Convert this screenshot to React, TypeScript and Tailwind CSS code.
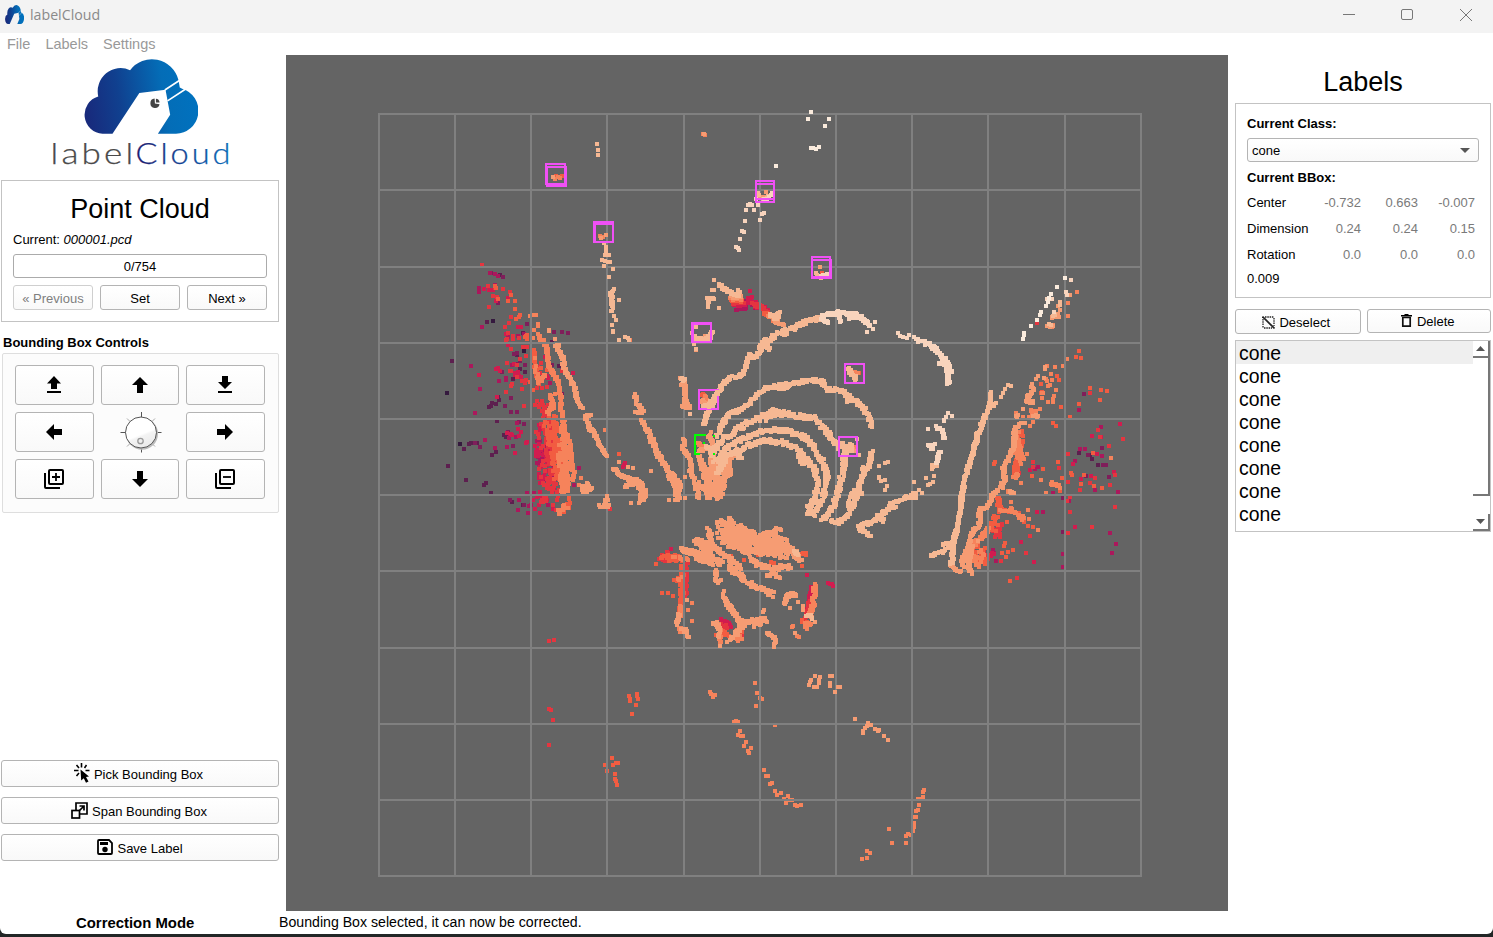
import React from "react";

/* ---------- point cloud data ---------- */

const PALETTE = [
  "#35193e", "#5d1f4f", "#7f1e5a", "#ab185c", "#d11c4f", "#e5353f",
  "#f25c41", "#f6835b", "#f69c73", "#f6b893", "#f8d4bd", "#faebdd",
];

// Each region is stored in thirds of a pixel relative to its origin.
type Trail = [from: number, to: number, spread: number, path: string];
type Region = { x: number; y: number; dots?: [number, string][]; trails?: Trail[] };

const REGIONS: Region[] = [
  {
    x: 430, y: 250,
    dots: [
      [0, "189,213 51,429 90,582 282,303"],
      [1, "171,216 210,74 67,333 117,582 102,597 123,580 141,579 186,615 197,606 54,648 108,690 162,705 168,699 183,728 177,471 183,468 187,459 197,462 204,440 207,450 222,555 228,562 249,387 261,315 279,248 366,276 387,348 201,513 270,357 285,367 279,765 246,756"],
      [2, "183,70 219,81 204,159 291,222 396,246 414,249 243,444 225,468 243,486 261,486 249,588 267,516 216,366 261,309 252,312 240,750 282,765 234,546 282,522 135,579 261,342 270,333 285,345 396,432 372,246 366,346 150,591"],
      [3, "180,69 195,72 204,78 195,104 156,231 147,113 147,119 147,125 123,348 150,417 135,489 165,570 195,594 231,591 228,384 207,393 246,345 237,564 264,780 303,765 264,258 282,252 261,519 258,562 240,553 447,654 432,705 447,705 234,262 228,390 291,728 312,728 330,733 294,789 297,768 360,400 322,572 320,640 325,620 345,690 268,750 355,765"],
      [4, "162,117 177,120 189,120 180,121 198,153 273,231 234,286 228,252 204,354 197,357 210,362 201,441 147,375 252,342 264,366 273,382 267,377 255,369 231,548 243,551 264,537 273,546 246,556 267,558 291,576 288,579 255,609 429,369 585,639 582,646 579,651 264,231 234,143 255,375 345,320 350,378 355,385 320,740 308,750 315,778 327,765 330,788 370,778 350,750"],
      [5, "155,46 174,108 195,113 189,138 201,141 177,171 219,117 237,219 243,201 225,231 228,271 243,297 234,249 249,268 270,327 288,318 231,339 243,363 261,345 240,363 246,402 243,408 276,417 228,426 282,467 240,125 267,265 291,290 279,291 333,339 288,390 395,364 231,267 249,259 261,380 276,393 285,400 539,778 325,350 330,370 318,365 340,385 335,415 350,410 322,415 318,545 340,755"],
      [6, "195,108 198,114 203,148 243,135 234,153 255,153 255,177 270,195 267,202 258,207 288,259 292,256 291,267 285,262 567,612 315,345 300,395 333,355 350,360 310,420"],
      [7, "299,198 312,195 319,195 324,222 323,228 312,240 309,264 324,252 330,258 327,265 330,270 342,270 342,285 315,324 525,540 453,684 448,704"],
      [8, "358,240 357,243 375,267 567,636 594,652 609,654 663,663 717,750 765,744 603,759 627,759 629,753"],
      [9, "528,6 516,30 525,33 540,36 522,48 549,57 537,81 552,117 567,150 552,198 558,210 546,225 549,243 548,246 567,270 597,270 585,262 594,264"],
    ],
    trails: [
      [7, 7, 1, "351,290 352,325 360,355 384,395 392,440 392,480"],
      [8, 8, 1, "378,290 384,300 400,325 400,350 420,385 434,415 442,450 455,475"],
      [8, 8, 1.2, "465,500 480,535 500,560 510,590 530,615"],
      [8, 8, 1, "378,285 390,288"], [8, 8, 1, "465,498 480,498"],
      [9, 9, 1.2, "545,125 545,150 546,180"],
      [6, 7, 1, "312,303 315,350 325,400 345,375"],
      [7, 7, 2.5, "368,435 366,470 350,490"],
      [7, 7, 1.2, "400,490 400,530 415,570 425,620 432,690"],
      [7, 7, 2, "395,530 405,600 410,660 412,720"],
      [6, 7, 2.5, "375,495 375,540 390,620 395,680 400,725 415,725"],
      [6, 7, 3, "425,745 405,775 385,785"],
      [5, 5, 10, "345,510 345,580 355,650 365,710 370,730"],
      [4, 5, 12, "345,540 340,600 350,660 365,710 350,760"],
      [3, 4, 11, "340,560 350,640 355,720"],
      [5, 6, 5, "325,455 350,480 350,540 375,600 385,680"],
      [8, 8, 1, "550,655 570,675 600,688 625,692 640,710"], [8, 8, 1, "585,708 610,702 630,695"],
      [8, 8, 2, "628,715 645,725 640,748"],
      [8, 8, 1.5, "612,435 620,455 640,485 615,490"], [8, 8, 2, "635,510 650,540 665,565 675,595 700,640 715,660"],
      [8, 8, 3, "715,685 735,690 740,720 742,748"], [8, 8, 1.2, "715,660 728,675 755,708"],
      [8, 8, 2, "530,745 530,765 512,768"], [8, 8, 2, "455,724 465,708 486,716"], [8, 8, 1, "470,700 470,724"],
      [9, 8, 1, "752,382 765,390 756,405"], [8, 8, 1.5, "765,420 765,455 775,470"],
    ],
  },
  {
    x: 630, y: 100,
    dots: [
      [7, "220,102 225,104 0,720"], [8, "222,102 408,276 570,501"],
      [11, "543,36 534,57 597,57 585,78"], [11, "543,144 550,144 558,147 567,141 438,198"],
      [10, "354,315 366,314 360,312 384,315 348,330 372,330 396,342 402,339 390,360 345,363 336,393 342,396 330,417 318,441 324,444 327,450 378,297 426,279 422,285 416,291"],
      [9, "252,540 245,570 252,570 234,621 267,624 198,682 186,699 192,732 198,748 398,298 386,285 384,280"],
      [4, "360,573 366,591 405,621"], [6, "576,519"], [10, "736,666 729,687 711,696"],
    ],
    trails: [
      [9, 9, 1, "230,598 250,594"], [9, 9, 0.5, "236,600 234,615"],
      [9, 9, 1.6, "268,555 285,565 300,578 325,585"], [9, 9, 1.6, "325,568 322,586 303,584"],
      [8, 8, 1, "305,590 332,590"], [7, 7, 1, "303,596 334,596"], [6, 6, 1, "303,602 336,602"], [5, 5, 1, "306,609 340,609"],
      [4, 4, 1.2, "312,617 346,612"], [3, 3, 1.5, "316,628 345,624 345,605"], [3, 3, 1.5, "358,600 372,612 372,622"],
      [4, 4, 2, "355,600 365,604 380,618 410,633"],
      [5, 5, 2, "370,610 390,620 405,635 420,645"], [6, 6, 2, "400,638 425,650"], [7, 8, 2.5, "415,645 440,660 458,672"], [9, 9, 1.8, "420,643 440,658 450,640"],
      [8, 8, 2, "205,715 225,710 240,705"], [9, 9, 1.4, "194,712 222,722 242,710 248,692"],
      [9, 9, 2, "385,748 400,730 430,710 465,693 500,680 535,662 570,655"],
      [9, 9, 1, "405,735 417,748"], [9, 9, 1, "455,700 468,706"],
      [10, 10, 1.4, "580,645 620,640 650,640 680,645 700,660 715,678"], [10, 10, 0.8, "625,635 630,665"], [10, 10, 0.8, "575,658 595,668"],
      [10, 10, 1.4, "655,655 690,650"], [8, 9, 1, "390,292 405,294 420,286"], [10, 10, 0.6, "398,300 410,300"], [9, 10, 1.2, "560,520 572,530 588,526"],
    ],
  },
  {
    x: 640, y: 340,
    dots: [
      [8, "33,393 87,479 134,474 135,410 168,30 162,12"],
      [9, "150,222 717,378 736,369 743,366 718,414 734,420 740,438 736,450 822,426 837,450 846,459 858,414 882,408 878,426 864,435 870,432 718,410 724,424 652,296 656,345"],
      [10, "864,267 774,-20 779,-12 789,-8 800,-6 808,-15 822,-9 828,-2 911,242 924,219 918,231 936,228 912,240"],
    ],
    trails: [
      [9, 9, 1.4, "375,5 350,50 325,55 305,105 265,115 235,155 215,185 200,225 192,250"],
      [9, 9, 1, "325,45 350,50"], [9, 9, 0.5, "380,5 388,28"],
      [9, 9, 1.8, "230,290 250,250 270,220 305,205 330,190 350,160 385,142 430,135 475,128 515,118 545,125 560,148 605,150 640,180 665,195 685,225 694,260"],
      [9, 9, 1, "420,148 450,138"], [9, 9, 1, "615,160 625,185"],
      [9, 9, 2.4, "215,345 240,305 270,285 300,262 340,240 385,225 430,220 480,230 525,235 550,265 580,298 600,320"],
      [9, 9, 1, "375,242 395,210 415,215"],
      [9, 9, 2.2, "225,370 250,335 280,310 320,290 370,275 415,270 450,275 490,290 520,320 545,360 562,400 560,440 545,480 530,510 500,520"],
      [9, 9, 2.2, "235,400 255,350 290,335 325,315 370,302 420,305 465,320 500,355 525,385 533,430 525,475 505,510"],
      [9, 9, 2.2, "470,345 495,370"], [9, 9, 1.6, "500,500 525,525"],
      [8, 8, 1.8, "175,345 190,385 195,420 205,470"], [8, 8, 2.2, "210,280 218,320 215,380 210,430 205,472"],
      [8, 8, 3.5, "250,340 245,380 235,430 235,472"], [8, 8, 3.5, "270,350 265,390 245,430 240,472"],
      [8, 9, 2.5, "280,340 300,350"], [8, 8, 3, "205,390 215,440 235,472"], [8, 8, 3, "228,380 225,470"],
      [8, 8, 1.6, "132,300 130,325 150,360 155,400 170,440 175,475"], [8, 8, 1.2, "175,430 190,450"],
      [9, 9, 2.2, "612,350 610,390 600,430 590,475 565,525 545,540"],
      [9, 9, 1.8, "692,335 690,375 670,395 660,430 645,480 625,520 600,548 575,545"], [9, 9, 3, "640,455 630,495"], [9, 9, 1.5, "665,385 675,400"], [9, 9, 1.5, "645,455 665,460"],
      [9, 9, 1.8, "655,560 690,550 720,530 750,500 770,505"], [9, 9, 1, "655,565 690,590"], [9, 9, 1.4, "710,525 730,545"],
      [9, 9, 1, "750,490 790,478 825,460 825,472"], [10, 10, 1.8, "830,0 865,10 895,35 920,70 925,100 925,135"], [10, 10, 1, "895,70 925,75 935,100"],
      [10, 10, 1.2, "890,262 908,270 912,295"], [10, 9, 1.6, "900,335 890,370 875,385"], [10, 10, 1, "865,315 875,325 882,315"],
      [8, 8, 1.2, "122,115 132,125 135,165 140,190"], [8, 8, 1.2, "130,200 150,195"],
      [8, 8, 2, "185,180 195,200 210,190"], [9, 9, 1.5, "192,198 215,198 225,175"], [6, 7, 1, "188,160 200,178"],
      [9, 9, 2, "625,88 638,105 652,116"], [7, 6, 1, "643,95 656,97"],
      [9, 9, 3.5, "608,310 615,335 632,315"], [8, 8, 1.2, "628,315 640,332"], [7, 7, 0.5, "640,318 642,330"],
      [7, 7, 1.2, "172,312 190,318"], [8, 8, 1.5, "175,328 195,330"],
      [9, 9, 1, "195,318 208,325"],
      [8, 8, 3, "95,410 110,440 115,470"], [8, 8, 2.5, "0,430 5,475 15,465"],
    ],
  },
  {
    x: 640, y: 510,
    dots: [
      [4, "93,118 501,195 565,218 570,222 576,222 580,228"], [5, "66,135 80,127 85,130 57,146 307,374"],
      [6, "48,161 102,209 66,249 84,249 98,258 311,150 354,135 486,168 228,374"],
      [7, "156,279 144,300 156,333 457,350 465,369 471,378 476,380 460,347"],
      [8, "251,243 372,300 370,305 450,294 474,276 489,288 489,301 240,408 525,336 141,270"],
    ],
    trails: [
      [5, 6, 2, "65,147 90,148 120,148"], [6, 7, 2, "65,140 120,140 140,150"],
      [6, 6, 2, "128,165 126,200 125,245 123,280 118,310"], [5, 5, 0.5, "140,160 138,210 138,255"], [7, 8, 1.2, "125,290 118,315 108,345"],
      [6, 7, 1.5, "110,208 125,205"], [7, 8, 2, "115,360 135,360 145,385"],
      [8, 8, 2.5, "120,118 150,125 180,145 220,160"], [8, 8, 2.5, "140,125 170,130 210,150"], [8, 8, 2.8, "165,90 190,110 220,140 245,165"],
      [8, 8, 2.8, "165,92 200,100 220,115"], [8, 8, 2, "208,60 212,100 240,125 275,150 300,175"], [8, 8, 4, "265,170 300,185"],
      [8, 8, 4, "235,45 265,30 290,50 320,65"], [8, 8, 3, "320,68 360,78 400,72 415,55"], [8, 8, 4, "235,65 270,80 310,85 360,90 410,95 435,90"],
      [8, 8, 3, "262,50 300,75 340,95 380,105 430,115 465,130"], [8, 8, 3, "240,85 270,105 310,120 350,125 400,130 440,140"],
      [8, 8, 4, "300,60 320,90 340,100"], [8, 8, 3, "265,40 280,90 330,115"],
      [8, 8, 3, "330,145 355,165 395,175 450,170"], [8, 8, 2.5, "385,190 415,200"], [8, 8, 2.5, "350,115 400,122 440,122"],
      [8, 8, 3, "440,110 465,128 480,148"], [6, 6, 1.5, "482,130 495,132"], [9, 9, 1.2, "462,125 472,132"], [6, 6, 1, "395,158 405,162"],
      [8, 8, 2.2, "270,180 310,205 345,230 375,240 400,255"], [8, 8, 1.5, "230,180 228,215 240,212"],
      [8, 8, 1.6, "250,255 262,280 285,310 300,335 310,345"], [8, 8, 2.2, "300,340 335,330 375,330"], [8, 8, 1.6, "345,345 365,340"],
      [8, 8, 2, "310,350 285,375 268,390"], [8, 7, 2, "222,338 235,345 240,380 240,395"],
      [4, 4, 3, "243,332 260,340 270,348"], [5, 5, 2.5, "245,348 265,352"], [6, 6, 3.5, "250,360 262,375"], [5, 6, 3, "285,375 305,365"], [7, 7, 3, "290,365 300,390"],
      [8, 8, 1.2, "380,368 395,378 408,390 405,408"], [8, 8, 1, "470,255 440,258 436,280"], [8, 8, 0.6, "445,250 468,252"],
      [4, 5, 1, "515,232 506,290 495,330"], [7, 7, 2, "525,228 522,265 515,300 508,325"], [7, 7, 3, "495,350 505,350"], [9, 9, 1.4, "500,315 518,322"], [6, 7, 2, "490,335 510,345"],
      [6, 6, 0.6, "272,138 275,148"],
    ],
  },
  {
    x: 920, y: 270,
    dots: [
      [11, "435,24 411,51 393,72 378,108 387,85 363,126 360,134 351,150 333,168 312,188 311,195 309,207 384,95"],
      [10, "453,30 438,67 442,74 402,126 381,88 396,87"],
      [9, "420,96 419,104 398,138 404,135 386,163 392,165 263,345 273,348 249,370 244,382 228,398 256,357"],
      [8, "449,75 415,108 420,120 416,141 398,168 380,168 354,318 348,327 372,324 375,290 375,298 309,417 315,460"],
      [7, "471,66 444,99 444,138 442,267 381,288 405,291 430,288 393,312 377,327 380,333 390,345 384,348 408,360 402,378 399,387 384,396 366,384 366,370 360,417 330,468 273,696 348,423 352,438 342,438 324,720 321,552 309,441 327,441 399,396 363,630 303,640 573,564 378,669 327,747 354,780 395,330 340,455"],
      [6, "477,243 468,261 483,264 411,318 417,330 363,342 423,411 510,354 543,360 561,363 540,390 477,402 450,441 399,460 408,468 492,615 522,648 546,654 453,609 456,615 483,642 414,576 369,597 324,767 340,771 279,840 264,846 258,861 270,933 519,549 426,624 420,663 225,576 222,582 255,819 252,828 246,849 312,755 297,730 303,742 261,756 336,618"],
      [5, "510,369 609,507 540,502 568,528 534,480 444,552 339,576 417,594 450,682 570,646 586,615 586,712 450,726 444,790 515,771 318,849 291,924 330,798 480,660 444,636 351,160 525,624 509,639 243,873 298,609 442,692 339,590"],
      [4, "600,462 516,498 531,552 459,582 582,606 351,726 465,771 483,627 303,816 216,850 222,852 342,876 213,858 513,618 543,502 329,600"],
      [3, "477,420 543,471 480,537 495,537 546,558 465,573 594,666 369,726 570,789 588,822 576,849 429,852 429,891 448,692 399,669 228,873 220,840 354,590 345,598 525,660 222,848"],
      [2, "492,372 546,534 504,555 549,585 567,621 498,618 429,684 429,786 557,585"],
      [1, "477,549 510,555 516,567 534,585"],
    ],
    trails: [
      [9, 9, 0.5, "212,368 210,395 222,408"], [9, 9, 1.4, "212,395 195,440 175,490 155,560 140,610 128,660 122,720 112,770 100,820 95,880"],
      [9, 9, 1, "112,780 95,820 70,845 32,858"], [9, 9, 0.6, "68,822 90,820"], [8, 8, 0.6, "92,885 108,898 123,906"],
      [8, 8, 1.4, "300,460 285,480 282,520 272,555 262,575 250,595 255,630 245,650 220,670 208,705 180,720 178,760 155,795 145,835 130,860 128,890"],
      [8, 8, 1, "335,345 340,360 325,380 320,395 340,398"], [7, 8, 2, "285,435 290,442"], [7, 8, 1, "335,418 340,440 355,438"],
      [7, 7, 3, "290,490 290,540 285,555"], [6, 7, 3.5, "305,485 300,515 295,550 305,575"], [6, 7, 2, "290,575 285,620 298,615"],
      [7, 8, 1.5, "205,775 190,800 165,820 150,850 145,890 155,910"], [6, 7, 6, "165,830 180,845 175,875 190,880"],
      [6, 5, 5, "235,740 220,770 235,800"], [6, 7, 2, "235,680 240,720 275,720 310,745"], [5, 6, 4, "200,850 185,880"],
      [7, 8, 1, "260,665 280,668"], [7, 7, 2, "395,640 420,652"], [8, 8, 1, "415,135 395,142"], [8, 7, 1, "385,165 400,168"], [5, 5, 2, "245,765 225,790"], [6, 7, 1, "365,365 370,370"],
    ],
  },
  {
    x: 535, y: 630,
    dots: [
      [5, "42,33 57,30 42,237 48,240 54,270 42,346"],
      [6, "282,198 285,206 285,213 306,192 306,198 309,207 303,225 291,252 231,384 210,405 234,405 243,399 249,399 216,423 240,432 240,447 243,454 246,465"],
      [7, "525,186 528,193 534,201 540,195 660,159 666,189 675,204 681,207 663,228 603,272 598,276 609,276 615,303 609,315 618,318 624,318 633,336 627,348 648,354 639,363 642,369 720,286 687,420 693,438 699,438 705,462 711,459 720,483 726,495 738,489 759,498 747,506 753,519 765,510 771,510 780,525 786,528 798,525 1062,597 1071,639 1113,639 1113,618 1119,612 1128,616 1134,604 1137,590 1137,579 1140,561 1144,561 1143,543 1149,540 1152,525 1164,501 1155,506 1148,506 1164,486 1167,480 996,663 1005,669 981,687 996,684"],
      [8, "840,138 828,150 825,157 822,165 855,141 852,150 852,159 846,171 837,171 885,138 891,138 885,159 885,168 900,186 909,171 915,171 960,267 999,279 1008,285 996,287 990,295 984,302 984,309 1020,297 1028,302 1032,300 1047,318 1059,330 780,9"],
      [7, "786,18 792,20"],
    ],
  },
  {
    x: 540, y: 130,
    dots: [
      [9, "170,42 174,60 174,76 192,340 198,352 198,362 195,374 207,375 204,395"],
      [7, "54,142 45,146 60,144 180,318 189,321"], [6, "48,139 66,138"], [8, "39,142 184,325 198,315"],
    ],
  },
];

function createRandom(seed: number) {
  let s = seed;
  return () => {
    s = (s * 1664525 + 1013904223) % 4294967296;
    return s / 4294967296;
  };
}

function parse(path: string): [number, number][] {
  return path.split(" ").map((p) => p.split(",").map(Number) as [number, number]);
}

function buildCloud(): string[] {
  const rand = createRandom(42);
  const layers = PALETTE.map(() => "");
  const put = (color: number, x: number, y: number) => {
    layers[color] += `M${Math.round(x - 2)} ${Math.round(y - 2)}h4v4h-4z`;
  };
  for (const region of REGIONS) {
    for (const [from, to, spread, path] of region.trails ?? []) {
      const pts = parse(path);
      const density = spread > 8 ? 1.4 : spread > 3 ? 2.8 : 2.2;
      for (let i = 0; i < pts.length - 1; i++) {
        const [ax, ay] = pts[i];
        const [bx, by] = pts[i + 1];
        const steps = Math.max(1, Math.ceil((Math.hypot(bx - ax, by - ay) / 6) * density));
        for (let k = 0; k <= steps; k++) {
          const t = k / steps;
          const along = (i + t) / (pts.length - 1);
          const color = Math.round(from + (to - from) * Math.min(1, Math.max(0, along + (rand() - 0.5) * 0.5)));
          const reach = spread * 1.5 + 1;
          put(
            color,
            region.x + (ax + (bx - ax) * t) / 3 + (rand() - 0.5) * reach,
            region.y + (ay + (by - ay) * t) / 3 + (rand() - 0.5) * reach,
          );
        }
      }
    }
    for (const [color, path] of region.dots ?? []) {
      for (const [x, y] of parse(path)) put(color, region.x + x / 3, region.y + y / 3);
    }
  }
  return layers;
}

const CLOUD = buildCloud();
const GRID_X = [379, 455, 531, 607, 684, 760, 836, 912, 988, 1065, 1141];
const GRID_Y = [114, 190, 267, 343, 419, 495, 571, 648, 724, 800, 876];

// Front and back faces of every labelled box.
const BOXES: [number, number, number, number][] = [
  [546, 164, 19, 20], [547, 167, 19, 19],
  [756, 181, 18, 18], [756, 184, 18, 18],
  [594, 222, 19, 20], [595, 224, 18, 18],
  [812, 257, 18, 20], [812, 260, 19, 18],
  [692, 323, 19, 19], [693, 324, 18, 18],
  [845, 364, 19, 19],
  [699, 390, 19, 19],
  [839, 437, 18, 19],
];

function PointCloudView() {
  const layer = (i: number) => <path key={i} d={CLOUD[i]} fill={PALETTE[i]} />;
  return (
    <svg className="block h-[856px] w-[942px]" viewBox="286 55 942 856" shapeRendering="crispEdges">
      <rect x="286" y="55" width="942" height="856" fill="#646464" />
      {[0, 1, 2, 3, 4, 5, 6, 7].map(layer)}
      <g fill="#808080">
        {GRID_X.map((x) => <rect key={x} x={x - 1} y="113" width="2" height="764" />)}
        {GRID_Y.map((y) => <rect key={y} x="378" y={y - 1} width="764" height="2" />)}
      </g>
      {[8, 9, 10, 11].map(layer)}
      <g fill="none" strokeWidth="2" stroke="#f050f5">
        {BOXES.map(([x, y, w, h], i) => <rect key={i} x={x} y={y} width={w} height={h} />)}
      </g>
      <path d="M706 435H695V454H700M713 436H715M704 442V444M713 454H715" fill="none" stroke="#00ff00" strokeWidth="2" />
      <path d="M707 407v-4h3v-4h3v-5h2v-4h4v6h-3v5h-3v5h-2v3h-4z" fill="#f6b893" />
    </svg>
  );
}

/* ---------- drawings ---------- */

function CloudMark({ className, id, eye }: { className: string; id: string; eye?: boolean }) {
  return (
    <svg className={className} viewBox="252 178 344 222" preserveAspectRatio="none">
      <defs>
        <linearGradient id={id} x1="0" y1="0.55" x2="1" y2="0.45">
          <stop offset="0" stopColor="#182a7c" />
          <stop offset="0.3" stopColor="#10408f" />
          <stop offset="0.7" stopColor="#046db7" />
          <stop offset="1" stopColor="#0072bf" />
        </linearGradient>
      </defs>
      <path
        fill={`url(#${id})`}
        d="M338 399H308A56 56 0 0 1 295 289A69 69 0 0 1 391 211A83 83 0 0 1 537 240L541 262L548 266A67.8 67.8 0 0 1 528 399H475L512 343L498 269L419 279Z"
      />
      <path d="M496 270L542 240M504 302L560 266" stroke="#fff" strokeWidth="5" />
      {eye && (
        <>
          <path d="M465 295a14 14 0 1 0 15 17l-14-2z" fill="#444" />
          <path d="M469 296a12 12 0 0 1 11 11h-11z" fill="#444" />
        </>
      )}
    </svg>
  );
}

type IconProps = { className?: string };

const ArrowIcon = ({ className = "" }: IconProps) => (
  <svg className={`size-4 ${className}`} viewBox="0 0 16 16"><path d="M8 0L16 8H11V16H5V8H0Z" /></svg>
);
const RaiseIcon = () => (
  <svg className="mb-px h-[17px] w-[14px]" viewBox="0 0 14 17"><path d="M7 0L14 7.5H10V13H4V7.5H0ZM0 15H14V17H0Z" /></svg>
);
const LowerIcon = () => (
  <svg className="h-[17px] w-[14px]" viewBox="0 0 14 17"><path d="M7 13L14 6H10V0H4V6H0ZM0 15H14V17H0Z" /></svg>
);
const StackIcon = ({ plus }: { plus?: boolean }) => (
  <svg className="size-5" viewBox="0 0 20 20" fill="none" stroke="#000" strokeWidth="2">
    <rect x="5" y="1" width="14" height="14" rx="1" />
    <path d="M1 4V18Q1 19 2 19H16" />
    <path d={plus ? "M8 8H16M12 4V12" : "M8 8H16"} strokeWidth="1.8" />
  </svg>
);
const PickIcon = () => (
  <svg className="mb-[3px] h-[20px] w-[16px]" viewBox="0 0 16 20">
    <path d="M7.5 0V4.5M2.5 2L5 5M12.5 2L10.5 5M0 7.5H4.5M11.5 7.5H15.5M5 10L2.5 13" stroke="#000" strokeWidth="1.6" fill="none" />
    <path d="M6.5 6.5L15 13.5L12 14L14.5 18.5L12 19.7L9.8 15.2L7.2 17.5Z" />
  </svg>
);
const SpanIcon = () => (
  <svg className="mb-[3px] size-[17px]" viewBox="0 0 17 17" fill="none" stroke="#000" strokeWidth="1.7">
    <path d="M5 8V1H16V12H9" /><rect x="1" y="8.5" width="7.5" height="7.5" />
    <path d="M8 9L12.5 4.5M8.5 4H13V8.5" />
  </svg>
);
const SaveIcon = () => (
  <svg className="mb-[3px] size-4" viewBox="0 0 16 16">
    <path d="M2 1H12L15 4V14Q15 15 14 15H2Q1 15 1 14V2Q1 1 2 1Z" fill="none" stroke="#000" strokeWidth="1.8" />
    <path d="M3 3H11V6H3Z" /><circle cx="8" cy="10.5" r="2.7" />
  </svg>
);
const DeselectIcon = () => (
  <svg className="mb-px h-[13px] w-[13px]" viewBox="0 0 13 13" fill="none" stroke="#222">
    <path d="M3 1H12M1 3V12M12 2V10M2 12H10" strokeWidth="1.3" strokeDasharray="1.5 0.8" />
    <path d="M0.5 0.5L12.5 12.5" strokeWidth="1.6" />
  </svg>
);
const TrashIcon = () => (
  <svg className="mb-[2px] h-[13px] w-[11px]" viewBox="0 0 11 13">
    <path d="M3.5 0H7.5V1H11V2.6H0V1H3.5Z" />
    <path d="M1.8 3.5H9.2V12.2H1.8Z" fill="none" stroke="#111" strokeWidth="1.7" />
  </svg>
);

function Dial() {
  return (
    <svg className="ml-px h-[41px] w-[42px]" viewBox="-21 -20.5 42 41">
      <defs>
        <linearGradient id="knob" x1="0.3" y1="0" x2="0.7" y2="1">
          <stop offset="0.55" stopColor="#fff" /><stop offset="0.62" stopColor="#f3f3f3" /><stop offset="1" stopColor="#e9e9e9" />
        </linearGradient>
      </defs>
      <path d="M0.5-20.5V20M-20.5 0H20.5" stroke="#555" />
      <path d="M-14-14L14 14M14-14L-14 14" stroke="#aaa" />
      <circle cx="1" cy="1.2" r="16" fill="#bbb" />
      <circle r="15.5" fill="url(#knob)" stroke="#555" />
      <circle cx="-0.5" cy="8.5" r="2.7" fill="#eee" stroke="#999" strokeWidth="1.3" />
    </svg>
  );
}

/* ---------- widgets ---------- */

function Button({ children, className = "" }: { children: React.ReactNode; className?: string }) {
  return (
    <button className={`flex items-center justify-center rounded-[3px] border border-[#b4b4b4] bg-linear-to-b from-white to-[#f9f9f9] ${className}`}>
      {children}
    </button>
  );
}

function LeftPanel() {
  return (
    <aside className="flex h-[856px] w-[286px] shrink-0 flex-col pl-px pr-[7px]">
      <div className="flex h-[125px] flex-col items-center pt-[4px]">
        <CloudMark className="ml-px h-[75px] w-[114px]" id="logo" eye />
        <svg className="mt-px h-[40px] w-[200px] overflow-visible" viewBox="0 0 200 40">
          <defs>
            <linearGradient id="word" gradientUnits="userSpaceOnUse" x1="96" x2="190" y1="0" y2="0">
              <stop offset="0" stopColor="#1b1e70" /><stop offset="1" stopColor="#0a6bb8" />
            </linearGradient>
          </defs>
          <g fontSize="28.5" fontWeight="300" fontFamily="Lato, sans-serif" letterSpacing="2.6" strokeWidth="0.25">
            <text x="10.5" y="28.5" textLength="86" lengthAdjust="spacingAndGlyphs" fill="#4a4a4a" stroke="#4a4a4a">label</text>
            <text x="95.5" y="28.5" textLength="98" lengthAdjust="spacingAndGlyphs" fill="url(#word)" stroke="url(#word)">Cloud</text>
          </g>
        </svg>
      </div>

      <section className="flex h-[142px] flex-col border border-[#c3c3c3] px-[11px]">
        <h1 className="mt-[12px] text-center text-[27px] leading-8">Point Cloud</h1>
        <p className="mt-[6px] leading-[18px]">Current: <i>000001.pcd</i></p>
        <div className="mt-[5px] flex h-6 items-center justify-center rounded-[3px] border border-[#ababab] pt-px">0/754</div>
        <div className="mt-[7px] grid grid-cols-3 gap-[7px]">
          <Button className="h-[25px] border-[#cfcfcf] pt-[2px] text-[#7f7f7f]">« Previous</Button>
          <Button className="h-[25px] pt-[2px]">Set</Button>
          <Button className="h-[25px] pt-[2px]">Next »</Button>
        </div>
      </section>

      <h2 className="mt-[12px] pl-[2px] font-bold leading-[18px]">Bounding Box Controls</h2>
      <section className="ml-px mt-px grid h-[160px] grid-cols-[79px_78px_79px] content-start justify-start gap-[7px] rounded-[2px] border border-[#dedede] bg-[#fcfcfc] pl-[12px] pt-[11px]">
        <Button className="h-[40px] pr-px"><RaiseIcon /></Button>
        <Button className="h-[40px]"><ArrowIcon /></Button>
        <Button className="h-[40px] pr-px pb-px"><LowerIcon /></Button>
        <Button className="h-[40px] pr-px"><ArrowIcon className="-rotate-90" /></Button>
        <div className="flex h-[40px] items-center justify-center"><Dial /></div>
        <Button className="h-[40px] pr-px"><ArrowIcon className="rotate-90" /></Button>
        <Button className="h-[40px] pr-px"><StackIcon plus /></Button>
        <Button className="h-[40px]"><ArrowIcon className="rotate-180" /></Button>
        <Button className="h-[40px] pr-px"><StackIcon /></Button>
      </section>

      <div className="mt-auto mb-[50px] flex flex-col gap-[10px]">
        <Button className="h-[27px] gap-[4px] pr-[3px] pt-[2px]"><PickIcon />Pick Bounding Box</Button>
        <Button className="h-[27px] gap-[4px] pr-[2px] pt-[2px]"><SpanIcon />Span Bounding Box</Button>
        <Button className="h-[27px] gap-[4px] pt-[2px]"><SaveIcon />Save Label</Button>
      </div>
    </aside>
  );
}

const BBOX_ROWS = [
  ["Center", "-0.732", "0.663", "-0.007"],
  ["Dimension", "0.24", "0.24", "0.15"],
  ["Rotation", "0.0", "0.0", "0.0"],
];

function RightPanel() {
  return (
    <aside className="flex w-[265px] shrink-0 flex-col pl-[7px] pr-[2px]">
      <h1 className="mt-[11px] text-center text-[27px] leading-8">Labels</h1>
      <section className="mt-[5px] flex h-[195px] flex-col border border-[#c3c3c3] px-[11px]">
        <h2 className="mt-[11px] font-bold leading-[18px]">Current Class:</h2>
        <div className="mt-[5px] flex h-6 items-center justify-between rounded-[3px] border border-[#b4b4b4] bg-linear-to-b from-white to-[#f9f9f9] pl-[4px] pr-[8px]">
          <span className="pt-px">cone</span>
          <svg className="h-[5px] w-[10px]" viewBox="0 0 10 5"><path d="M0 0H10L5 5Z" fill="#555" /></svg>
        </div>
        <h2 className="mt-[7px] font-bold leading-[18px]">Current BBox:</h2>
        <div className="mt-[3px] flex flex-col">
          {BBOX_ROWS.map(([name, ...values]) => (
            <div key={name} className="grid h-[26px] grid-cols-[57px_57px_57px_57px] items-center">
              <span>{name}</span>
              {values.map((v, i) => <span key={i} className="text-right text-[#7a7a7a]">{v}</span>)}
            </div>
          ))}
        </div>
        <p className="mt-[2px] leading-[18px]">0.009</p>
      </section>

      <div className="mt-[11px] flex gap-[6px]">
        <Button className="h-[25px] flex-1 gap-[4px] pr-[3px] pt-[2px]"><DeselectIcon />Deselect</Button>
        <Button className="h-[24px] flex-1 gap-[5px] pr-[2px] pt-px"><TrashIcon />Delete</Button>
      </div>

      <section className="mt-[6px] flex h-[192px] border border-[#c3c3c3]">
        <ul className="min-w-0 flex-1 text-[19.4px]">
          {Array.from({ length: 8 }, (_, i) => (
            <li key={i} className={i === 0 ? "h-[23px] bg-[#efefef] pl-[3px] leading-[24px]" : "h-[23px] pl-[3px] leading-[24px]"}>cone</li>
          ))}
        </ul>
        <div className="flex w-[17px] flex-col">
          <div className="flex h-[17px] items-center justify-center border-b-2 border-r-2 border-[#777]">
            <svg className="h-[5px] w-[9px]" viewBox="0 0 9 5"><path d="M0 5H9L4.5 0Z" fill="#555" /></svg>
          </div>
          <div className="h-[138px] border-b-2 border-r-2 border-[#777]" />
          <div className="mt-auto flex h-[17px] items-center justify-center border-b-2 border-r-2 border-[#777]">
            <svg className="h-[5px] w-[9px]" viewBox="0 0 9 5"><path d="M0 0H9L4.5 5Z" fill="#555" /></svg>
          </div>
        </div>
      </section>
    </aside>
  );
}

export default function App() {
  return (
    <div className="flex h-[937px] w-[1493px] flex-col overflow-hidden bg-[#222626] font-['Liberation_Sans',Arial,sans-serif] text-[13px] text-black">
      <div className="flex h-[934px] flex-col overflow-hidden rounded-b-[6px] bg-white">
        <header className="flex h-[33px] shrink-0 items-center bg-[#f3f3f3] pb-[4px] pl-[5px] pr-[20px]">
          <CloudMark className="h-[19px] w-[19px]" id="mark" />
          <span className="ml-[6px] flex-1 font-['Open_Sans','Noto_Sans',sans-serif] text-[14.2px] text-[#8a8a8a]">labelCloud</span>
          <svg className="h-[14px] w-[131px]" viewBox="0 0 131 14" fill="none" stroke="#777">
            <path d="M1 6.5H13" />
            <rect x="59.5" y="1.5" width="11" height="10" rx="1.5" />
            <path d="M118 1L130 13M130 1L118 13" />
          </svg>
        </header>
        <nav className="flex h-[22px] shrink-0 items-center gap-[15px] pl-[7px] pt-px text-[14.5px] text-[#999]">
          <span>File</span><span>Labels</span><span>Settings</span>
        </nav>
        <main className="flex h-[856px] shrink-0">
          <LeftPanel />
          <PointCloudView />
          <RightPanel />
        </main>
        <footer className="flex h-[23px] items-center">
          <strong className="w-[279px] pl-[76px] pt-px text-[14.9px]">Correction Mode</strong>
          <span className="text-[14.15px]">Bounding Box selected, it can now be corrected.</span>
        </footer>
      </div>
    </div>
  );
}
